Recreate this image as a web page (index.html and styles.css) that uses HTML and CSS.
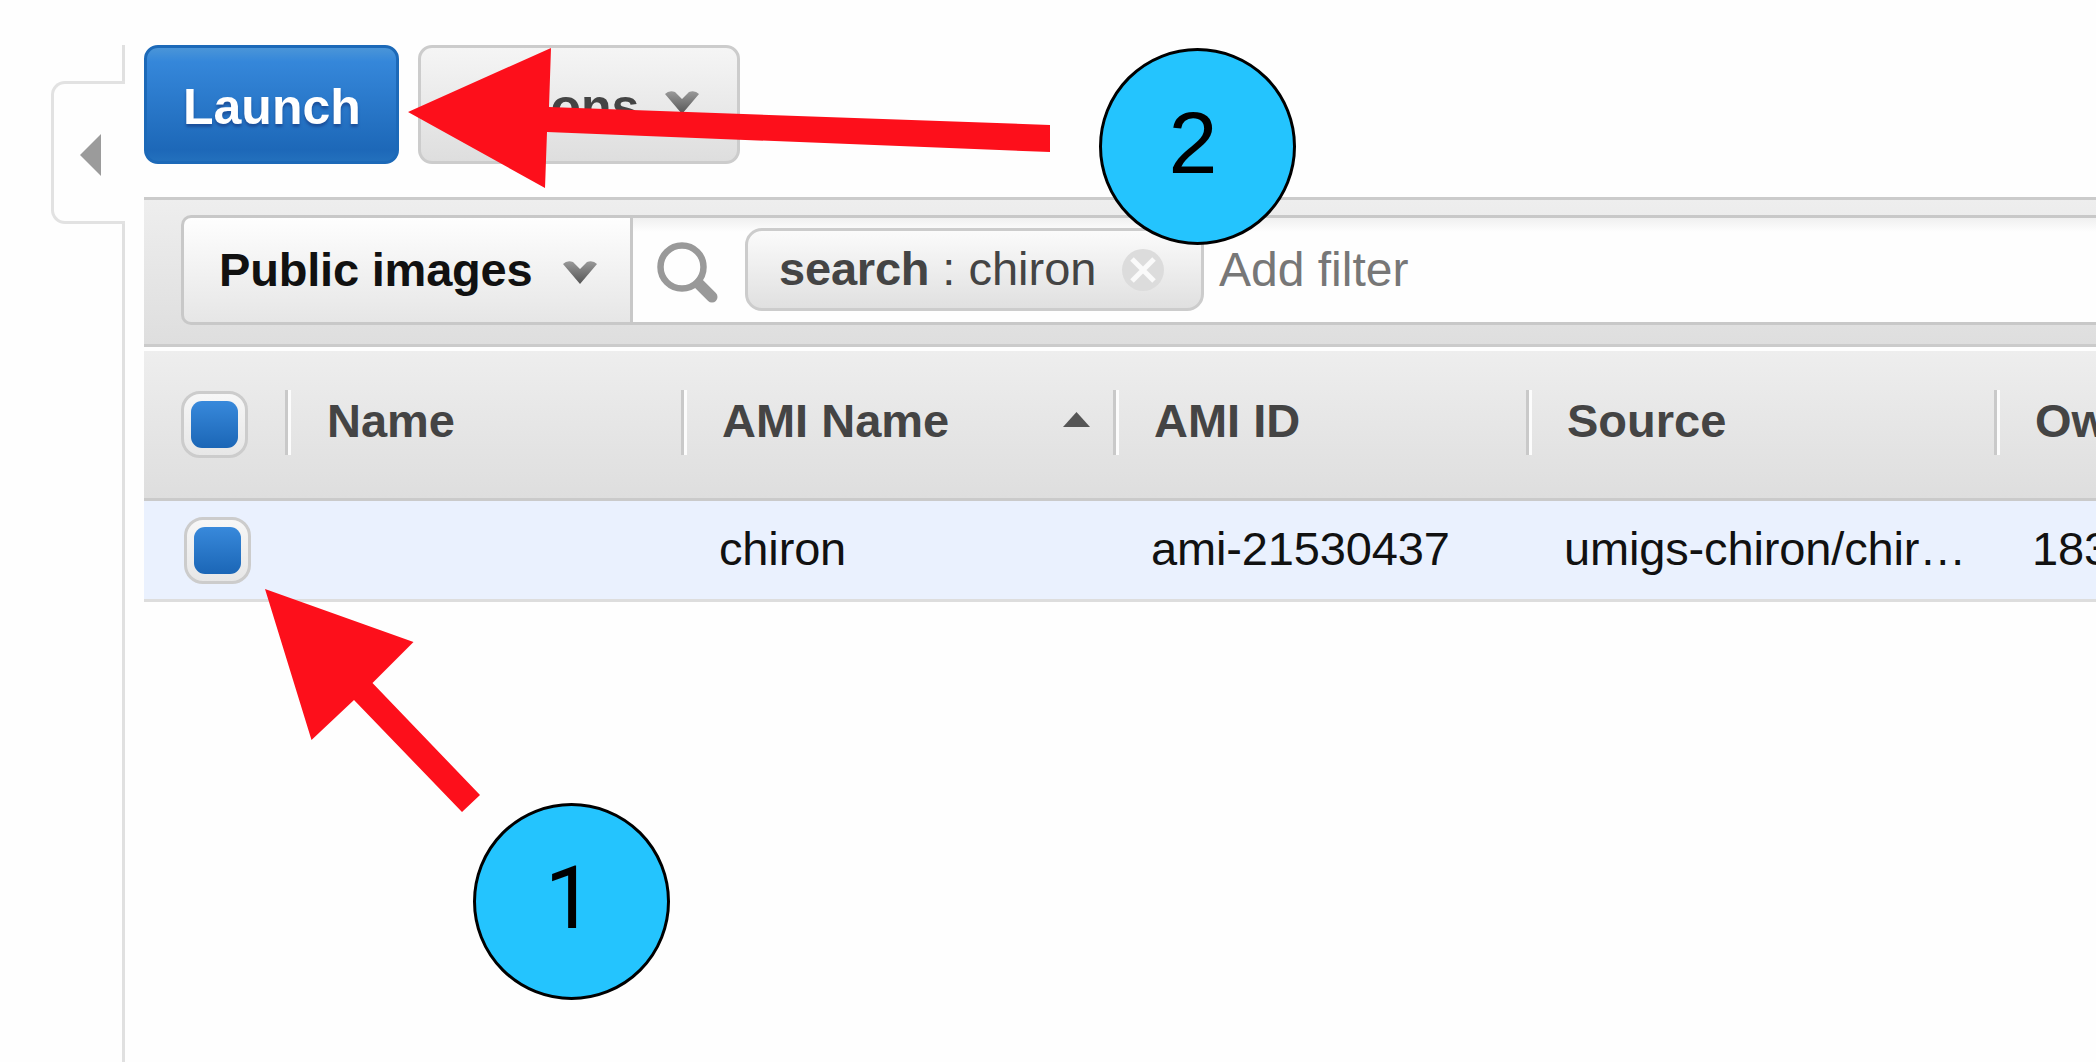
FILE: index.html
```html
<!DOCTYPE html>
<html lang="en">
<head>
<meta charset="utf-8">
<title>AMI images</title>
<link rel="stylesheet" href="styles.css">
</head>
<body>
<div class="page">
  <aside class="rail">
    <div class="rail-top"></div>
    <button class="rail-tab" aria-label="Collapse sidebar">
      <svg width="21" height="42" viewBox="0 0 21 42"><path d="M0 21 21 0V42Z" fill="#9b9b9b"/></svg>
    </button>
    <div class="rail-line"></div>
  </aside>
  <main class="content">
    <div class="toolbar">
      <button class="btn btn-primary">Launch</button>
      <button class="btn btn-default">Actions
        <svg class="chevron" width="34" height="23" viewBox="0 0 34 23">
          <defs><linearGradient id="shade" x1="0" y1="0" x2="0" y2="1"><stop offset="0" stop-color="#999"/><stop offset="1" stop-color="#555"/></linearGradient></defs>
          <path d="M0 3Q4-1 10 1L17 8 24 1Q30-1 34 3L17 23Z" fill="url(#shade)"/>
        </svg>
      </button>
    </div>
    <div class="filterbar">
      <button class="scope">Public images
        <svg class="chevron" width="34" height="23" viewBox="0 0 34 23"><path d="M0 3Q4-1 10 1L17 8 24 1Q30-1 34 3L17 23Z" fill="url(#shade)"/></svg>
      </button>
      <div class="search">
        <svg class="magnifier" width="62" height="62" viewBox="0 0 62 62" fill="none" stroke="#999"><circle cx="25" cy="25" r="21.5" stroke-width="6.5"/><path d="M42 42 55 55" stroke-width="11" stroke-linecap="round"/></svg>
        <div class="token"><b>search</b><span>: chiron</span>
          <svg class="remove" width="42" height="42" viewBox="0 0 42 42"><circle cx="21" cy="21" r="21" fill="#dcdcdc"/><path d="M10 10 32 32M32 10 10 32" stroke="#fafafa" stroke-width="5"/></svg>
        </div>
        <span class="placeholder">Add filter</span>
      </div>
    </div>
    <div class="grid grid-head">
      <div class="check-cell"><span class="checkbox"></span></div>
      <div class="head-cell name">Name</div>
      <div class="head-cell">AMI Name
        <svg class="sort" width="27" height="15" viewBox="0 0 27 15"><path d="M13.500 0 27 15H0Z" fill="#555"/></svg>
      </div>
      <div class="head-cell">AMI ID</div>
      <div class="head-cell">Source</div>
      <div class="head-cell">Owner</div>
    </div>
    <div class="grid grid-row">
      <div class="check-cell"><span class="checkbox"></span></div>
      <div class="cell"></div>
      <div class="cell">chiron</div>
      <div class="cell">ami-21530437</div>
      <div class="cell">umigs-chiron/chir…</div>
      <div class="cell">183</div>
    </div>
  </main>
  <svg class="arrows" width="2096" height="1062" viewBox="0 0 2096 1062" fill="#fd0f1b">
    <path d="M408 112 551 48 549 107 1050 125V152L547 132 545 188Z"/>
    <path d="M265 589 413.500 642 372.500 683 480 795 462 812 354 700 311.500 740Z"/>
  </svg>
  <div class="step step-two">2</div>
  <div class="step step-one">1</div>
</div>
</body>
</html>
```
FILE: styles.css
```css
* { box-sizing: border-box; }

body {
  margin: 0;
  background: #fefefe;
  font: 47px/54px "Liberation Sans", Arial, sans-serif;
  color: #111;
}

button {
  margin: 0;
  padding: 0;
  font: inherit;
  color: inherit;
}

svg { display: block; flex: none; }

.page {
  position: relative;
  display: flex;
  gap: 19px;
  width: 100%;
  height: 1062px;
  overflow: hidden;
}

/* sidebar edge with its collapse tab */
.rail {
  display: flex;
  flex-direction: column;
  flex: none;
  width: 125px;
  padding: 45px 0 0 51px;
}

.rail-top,
.rail-line { border-right: 3px solid #e0e0e0; }

.rail-top { height: 36px; }

.rail-line { flex: 1; }

.rail-tab {
  display: flex;
  align-items: center;
  height: 143px;
  padding: 4px 0 0 26px;
  border: 3px solid #e2e2e2;
  border-right: 0;
  border-radius: 14px 0 0 14px;
  background: #fefefe;
}

.content {
  flex: 1;
  min-width: 0;
  padding-top: 45px;
}

.toolbar {
  display: flex;
  gap: 19px;
  height: 152px;
}

.btn {
  display: flex;
  align-items: center;
  height: 119px;
  padding: 5px 0 0 36px;
  border-radius: 14px;
  font-size: 50px;
  font-weight: bold;
}

.btn-primary {
  width: 255px;
  border: 3px solid #1c69b8;
  background: linear-gradient(#4a95d8, #3587da 12%, #1d68b8 90%, #2370bd);
  color: #fff;
  text-shadow: 0 3px 3px #1b4f9a;
}

.btn-default {
  width: 322px;
  gap: 26px;
  padding-left: 35px;
  border: 3px solid #ccc;
  background: linear-gradient(#f5f5f5, #dedede);
  color: #444;
}

.btn-default .chevron { margin-bottom: 9px; }

.filterbar {
  display: flex;
  height: 150px;
  padding: 15px 0 19px 37px;
  border: solid #cbcbcb;
  border-width: 3px 0;
  background: linear-gradient(#eee, #dedede);
}

.scope {
  display: flex;
  align-items: center;
  gap: 31px;
  width: 449px;
  height: 110px;
  padding-left: 35px;
  border: 3px solid #c8c8c8;
  border-right: 0;
  border-radius: 10px 0 0 10px;
  background: linear-gradient(#fefefe, #e6e6e6);
  font-weight: bold;
  letter-spacing: -0.2px;
  white-space: nowrap;
}

.scope .chevron { margin-top: 4px; }

.search {
  display: flex;
  flex: 1;
  align-items: center;
  height: 110px;
  padding-left: 24px;
  border: 3px solid #c8c8c8;
  border-right: 0;
  background: linear-gradient(#f0f0f0, #fefefe 14px);
}

.magnifier { margin-top: 6px; }

.token {
  display: flex;
  align-items: center;
  gap: 13px;
  width: 459px;
  height: 83px;
  margin: -2px 0 0 26px;
  padding-left: 31px;
  border: 3px solid #ccc;
  border-radius: 17px;
  background: linear-gradient(#fbfbfb, #e0e0e0);
  color: #444;
}

.token b { letter-spacing: -0.2px; }

.token .remove { margin: 2px 0 0 12px; }

.placeholder {
  margin-left: 15px;
  color: #777;
  font-size: 48px;
}

.grid {
  display: grid;
  grid-template-columns: 141px 396px 432px 413px 468px 1fr;
  align-items: center;
  white-space: nowrap;
}

.grid-head {
  height: 150px;
  margin-top: 4px;
  padding-bottom: 4px;
  border-bottom: 3px solid #cacaca;
  background: linear-gradient(#eee, #dedede);
  color: #444;
  font-weight: bold;
}

.grid-head .checkbox { margin-top: 3px; }

.head-cell {
  display: flex;
  align-items: center;
  justify-content: space-between;
  height: 65px;
  padding: 0 23px 3px 38px;
  border-left: 3px solid #c9c9c9;
  box-shadow: inset 3px 0 #fcfcfc;
}

.head-cell.name { padding-left: 39px; }

.sort { margin-top: -3px; }

.grid-row {
  height: 101px;
  border-bottom: 3px solid #ddd;
  background: #eaf1fe;
}

.check-cell { padding-left: 37px; }

.grid-row .check-cell { padding-left: 40px; }

.checkbox {
  display: flex;
  width: 67px;
  height: 67px;
  padding: 7px;
  border: 3px solid #ccc;
  border-radius: 19px;
  background: linear-gradient(#f7f7f7, #e7e7e7);
}

.checkbox::before {
  content: "";
  flex: 1;
  border-radius: 11px;
  background: linear-gradient(#3889db, #1b66b6);
}

.cell {
  padding: 0 0 2px 38px;
  letter-spacing: -0.15px;
}

/* annotations drawn over the page */
.arrows {
  position: absolute;
  top: 0;
  left: 0;
}

.step {
  position: absolute;
  width: 197px;
  height: 197px;
  border: 3px solid #000;
  border-radius: 50%;
  background: #24c4fe;
  color: #000;
  font-size: 88px;
  line-height: 184px;
  text-align: center;
}

.step-two {
  top: 48px;
  left: 1099px;
  padding-right: 9px;
}

.step-one {
  top: 803px;
  left: 473px;
  padding-right: 4px;
  font-family: Roboto, "Liberation Sans", sans-serif;
}
```
